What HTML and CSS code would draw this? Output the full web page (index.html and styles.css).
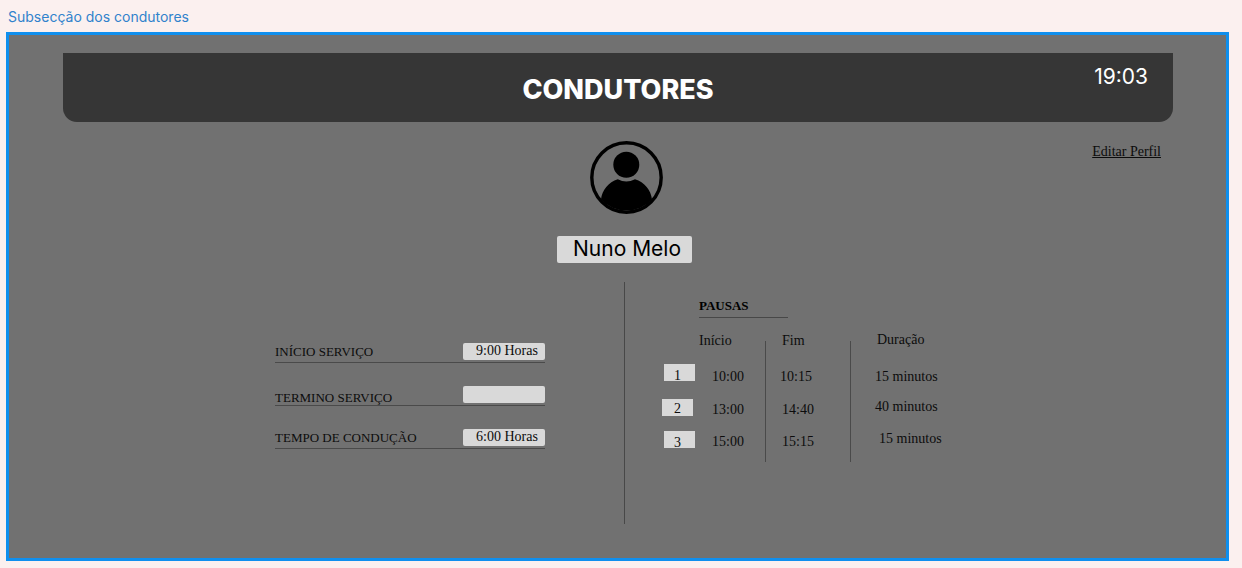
FILE: index.html
```html
<!DOCTYPE html>
<html lang="pt">
<head>
<meta charset="utf-8">
<title>Subsecção dos condutores</title>
<link rel="stylesheet" href="styles.css">
</head>
<body>
<p class="frame-label">Subsecção dos condutores</p>
<main class="frame">
  <header class="topbar">
    <h1 class="title">CONDUTORES</h1>
    <time class="clock">19:03</time>
  </header>

  <section class="profile">
    <div class="identity">
      <svg class="avatar" viewBox="0 0 73 73" aria-hidden="true">
        <circle cx="36.5" cy="36.5" r="34.7" fill="none" stroke="#000" stroke-width="3.4"/>
        <circle cx="36.3" cy="23.7" r="13"/>
        <path d="M11 58.5C12 49 18.500 41 27.800 38.200Q36.300 42.800 45 38.200C54.500 41 61 49 62 58.500A35 35 0 0 1 11 58.500Z"/>
      </svg>
      <input class="field name" type="text" value="Nuno Melo" aria-label="Nome">
    </div>
    <a class="edit" href="#">Editar Perfil</a>
  </section>

  <div class="details">
    <form class="service">
      <div class="service-row">
        <label for="start">INÍCIO SERVIÇO</label>
        <input class="field hours" id="start" type="text" value="9:00 Horas">
      </div>
      <div class="service-row low">
        <label for="end">TERMINO SERVIÇO</label>
        <input class="field hours" id="end" type="text" value="">
      </div>
      <div class="service-row">
        <label for="driving">TEMPO DE CONDUÇÃO</label>
        <input class="field hours" id="driving" type="text" value="6:00 Horas">
      </div>
    </form>
    <div class="divider"></div>
    <section class="breaks">
      <h2 class="breaks-title">PAUSAS</h2>
      <table class="breaks-table">
        <thead>
          <tr><td class="index"></td><th class="start">Início</th><th class="end">Fim</th><th class="length">Duração</th></tr>
        </thead>
        <tbody>
          <tr><td class="index"><span class="badge low">1</span></td><td class="start">10:00</td><td class="end near">10:15</td><td class="length">15 minutos</td></tr>
          <tr><td class="index shifted"><span class="badge">2</span></td><td class="start">13:00</td><td class="end">14:40</td><td class="length raised">40 minutos</td></tr>
          <tr><td class="index"><span class="badge low">3</span></td><td class="start">15:00</td><td class="end">15:15</td><td class="length raised far">15 minutos</td></tr>
        </tbody>
      </table>
    </section>
  </div>
</main>
</body>
</html>
```
FILE: styles.css
```css
* { box-sizing: border-box; }

body {
  margin: 0;
  background: #fbf0ef;
  color: #0c0c0c;
  font: 14px/18px "Liberation Serif", serif;
}

.frame-label {
  margin: 0;
  padding: 8px 8px 6px;
  color: #3082cc;
  font-family: Inter, sans-serif;
}

.frame {
  margin: 0 13px 7px 6px;
  padding: 18px 0 34px;
  border: 3px solid #0f8fee;
  background: #717171;
}

.topbar {
  display: grid;
  grid-template-columns: 1fr auto 1fr;
  min-height: 69px;
  margin: 0 53px 0 54px;
  padding: 11px 25px 0;
  border-radius: 0 0 14px 14px;
  background: #363636;
  color: #fff;
  font-family: Inter, sans-serif;
}

.title {
  grid-column: 2;
  margin: 8px 0 0;
  font-size: 27px;
  line-height: 36px;
  font-weight: 800;
}

.clock {
  justify-self: end;
  font-size: 21px;
  line-height: 26px;
}

.profile {
  display: grid;
  grid-template-columns: 1fr auto 1fr;
  padding: 19px 0 0 14px;
}

.identity {
  grid-column: 2;
  display: flex;
  flex-direction: column;
  align-items: center;
  gap: 22px;
}

.avatar { width: 73px; height: 73px; margin-left: 3px; }

.edit {
  justify-self: end;
  align-self: start;
  margin: 2px 65px 0 0;
  color: inherit;
}

.field {
  border: 0;
  border-radius: 2px;
  background: #d9d9d9;
  color: #0c0c0c;
  font: inherit;
}

.name {
  width: 135px;
  height: 27px;
  padding: 0 0 2px 16px;
  color: #000;
  font: 400 21px/24px Inter, sans-serif;
}

.details {
  display: grid;
  grid-template-columns: 1fr 1px 1fr;
  min-height: 242px;
  margin-top: 19px;
  padding-left: 14px;
}

.divider { background: #484848; }

.service {
  display: flex;
  flex-direction: column;
  gap: 23px;
  justify-self: end;
  width: 270px;
  margin: 61px 79px 0 0;
}

.service-row {
  display: flex;
  align-items: center;
  justify-content: space-between;
  height: 20px;
  padding-bottom: 2px;
  border-bottom: 1px solid #4a4a4a;
  font-size: 13px;
}

.service-row.low label { padding-top: 7px; }

.hours {
  width: 82px;
  height: 17px;
  padding: 0 0 2px 13px;
  font-size: 14px;
}

.breaks { margin: 15px 0 0 37px; }

.breaks-title {
  width: 89px;
  margin: 0 0 7px 37px;
  padding-bottom: 2px;
  border-bottom: 1px solid #484848;
  color: #000;
  font-size: 13px;
  line-height: 18px;
}

.breaks-table {
  border-collapse: collapse;
  table-layout: fixed;
  width: 288px;
}

.breaks-table th,
.breaks-table td {
  height: 32px;
  padding: 7px 0 0 13px;
  font-weight: 400;
  text-align: left;
  vertical-align: top;
}

.breaks-table thead th,
.breaks-table thead td { height: 36px; }

.breaks-table tbody tr + tr td { padding-top: 8px; }

.breaks-table .index { width: 37px; padding: 3px 0 0 2px; }
.breaks-table tbody tr + tr .index { padding-top: 6px; }
.breaks-table .index.shifted { padding-left: 0; }
.breaks-table .start { width: 66px; }
.breaks-table .end { width: 85px; padding-left: 17px; }
.breaks-table .end.near { padding-left: 15px; }
.breaks-table .length { padding-left: 25px; }
.breaks-table tbody tr + tr .length.raised { padding-top: 5px; }
.breaks-table .length.far { padding-left: 29px; }
.breaks-table th.start { padding-left: 0; }
.breaks-table th.length { padding: 6px 0 0 27px; }
.breaks-table tbody tr:last-child td { height: 37px; }

.breaks-table .end,
.breaks-table .length {
  background: linear-gradient(#4a4a4a, #4a4a4a) left bottom / 1px 100% no-repeat;
}

.breaks-table th.end,
.breaks-table th.length { background-size: 1px 20px; }

.badge {
  display: block;
  width: 31px;
  height: 17px;
  background: #d9d9d9;
  line-height: 20px;
  text-align: center;
}

.badge.low { line-height: 24px; padding-right: 4px; }
```
